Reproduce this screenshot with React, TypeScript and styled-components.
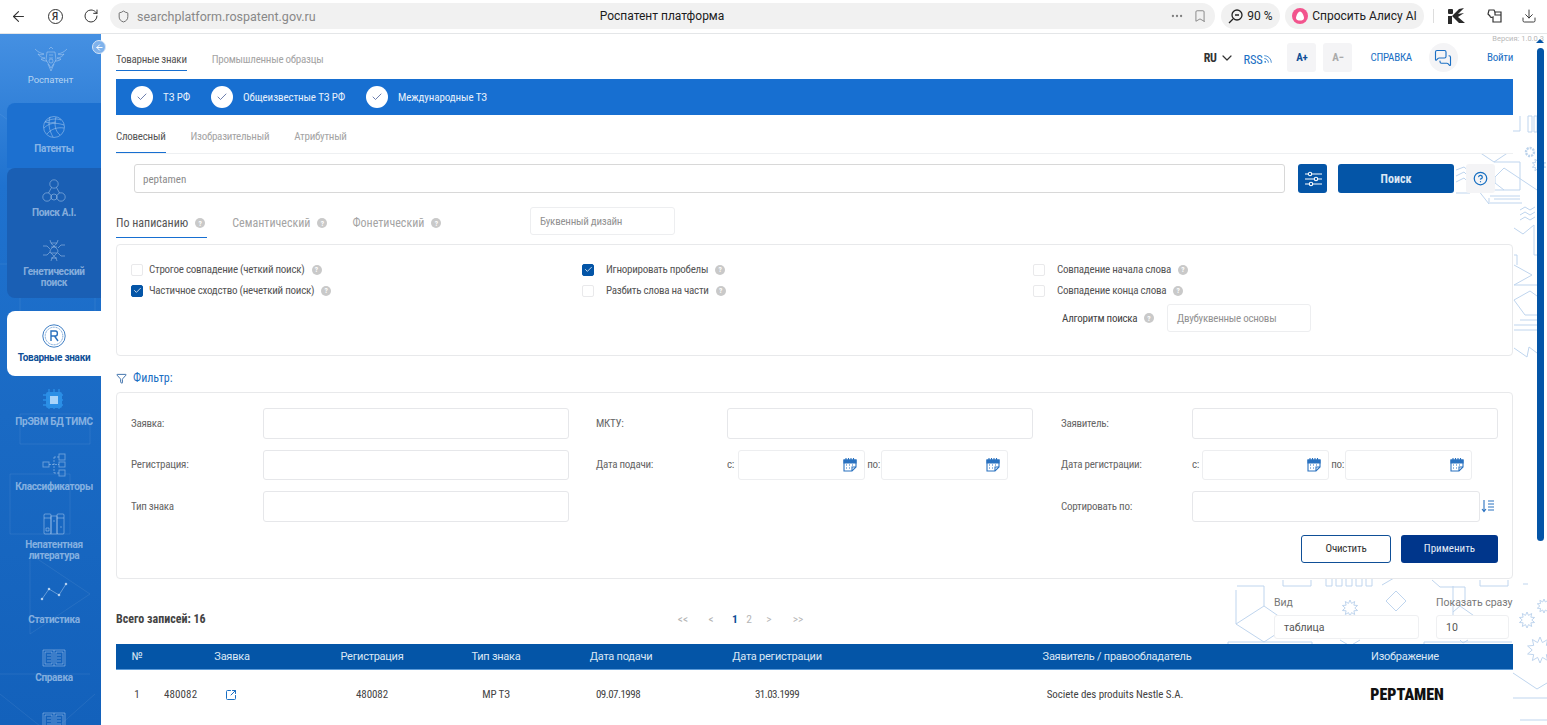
import React from "react";
import styled, { createGlobalStyle } from "styled-components";
import {
  ArrowLeft, RotateCw, Shield, Bookmark, Ellipsis, Download, Check,
  Rss, MessagesSquare, ChevronDown, Funnel, SquareArrowOutUpRight, CircleHelp,
} from "lucide-react";

const WIDE = `Roboto, "Liberation Sans", sans-serif`;

const Global = createGlobalStyle`
  html, body { margin: 0; padding: 0; height: 100%; overflow: hidden; background: #fff; }
  #root { height: 100%; }
  * { box-sizing: border-box; }
  body { font-family: ${WIDE}; font-size: 11px; font-stretch: 75%; letter-spacing: -0.26px; color: #444; }
`;

const Page = styled.div`display: flex; flex-direction: column; width: 1547px; height: 725px; overflow: hidden;`;

/* browser bar */
const BrowserBar = styled.header`
  height: 34px; flex: none; display: flex; align-items: center; padding: 0 0 1px 0; font-stretch: 100%;
  background: #fff; border-bottom: 1px solid #e4e6e8; color: #333; letter-spacing: 0;
`;
const NavSlot = styled.div<{ $w: number }>`
  width: ${p => p.$w}px; flex: none; display: flex; justify-content: center; align-items: center;
`;
const YaBadge = styled.span`
  width: 15px; height: 15px; border: 1.4px solid #333; border-radius: 50%; display: flex;
  align-items: center; justify-content: center; font-size: 10px; font-weight: 500; color: #333;
`;
const UrlPill = styled.div`
  width: 1105px; height: 26px; margin-left: 2px; flex: none; background: #f1f1f1; border-radius: 13px;
  display: grid; grid-template-columns: 1fr auto 1fr; align-items: center; padding: 0 8px 0 7px;
`;
const UrlLeft = styled.div`display: flex; align-items: center; gap: 7px; color: #888; font-size: 12.5px;`;
const Title = styled.div`font-size: 12px; color: #1c1c1c;`;
const UrlRight = styled.div`display: flex; align-items: center; justify-content: flex-end; gap: 9px; color: #7f7f7f;`;
const Pill = styled.div<{ $w: number; $ml: number }>`
  width: ${p => p.$w}px; margin-left: ${p => p.$ml}px; height: 26px; flex: none; border-radius: 13px;
  background: #f1f1f1; display: flex; align-items: center; justify-content: center; gap: 4px;
  font-size: 12px; color: #222;
`;
const BarSep = styled.div`width: 1px; height: 14px; background: #ddd; margin-left: 9px; flex: none;`;

const Body = styled.div`flex: 1; min-height: 0; display: flex;`;

/* sidebar */
const Sidebar = styled.aside`
  width: 101px; flex: none; position: relative; overflow: visible; display: flex; flex-direction: column;
  background: linear-gradient(180deg, #4590e2 0%, #1f72cf 22%, #1a6ac4 55%, #1361bb 100%);
  padding-left: 7px; z-index: 3; font-stretch: 100%;
`;
const SideLines = styled.svg`position: absolute; left: 0; top: 0; pointer-events: none;`;
const Collapse = styled.button`
  position: absolute; left: 92px; top: 6px; width: 14px; height: 14px; border-radius: 50%; padding: 0;
  border: 1.5px solid #d5e5f7; background: #7fb2ec; display: flex; align-items: center; justify-content: center; color: #fff;
`;
const Logo = styled.div`
  height: 69px; flex: none; margin-left: -7px; padding-top: 12px; display: flex; flex-direction: column; align-items: center;
  gap: 2px; color: rgba(215,230,248,.8); font-size: 9.5px; position: relative; letter-spacing: -0.1px;
`;
const SideBlock = styled.div<{ $tone: "light" | "dark" }>`
  position: relative; border-radius: 8px 0 0 ${p => (p.$tone === "dark" ? "8px" : "0")};
  background: ${p => (p.$tone === "dark" ? "#1a5fb4" : "#1c70d0")};
`;
const SideItem = styled.div<{ $active?: boolean; $shift?: number; $gap?: number }>`
  position: relative; height: 65px; flex: none; display: flex; flex-direction: column; align-items: center; justify-content: center;
  gap: ${p => p.$gap ?? 4}px; padding-bottom: ${p => p.$shift ?? 0}px;
  font-size: 10px; font-weight: 700; line-height: 11px; text-align: center; letter-spacing: -0.3px;
  color: ${p => (p.$active ? "#0f4f97" : "rgba(205,224,246,.62)")};
  background: ${p => (p.$active ? "#fff" : "transparent")};
  border-radius: ${p => (p.$active ? "8px 0 0 8px" : "0")};
  margin-top: ${p => (p.$active ? "13px" : "0")};
  svg { flex: none; }
`;

/* main */
const Main = styled.main`
  flex: 1; min-width: 0; position: relative; background: #fff; padding: 0 34px 0 15px; overflow: hidden;
`;
const Decor = styled.svg`position: absolute; right: 0; top: 76px;`;
const Content = styled.div`position: relative; z-index: 1; display: flex; flex-direction: column;`;
const Version = styled.div`position: absolute; right: 3px; top: 0; font-size: 7.5px; color: #b8b8b8; letter-spacing: 0; font-stretch: 100%;`;
const ScrollUp = styled.div`
  position: absolute; left: 1435px; top: 5px; width: 0; height: 0; z-index: 2;
  border-left: 4px solid transparent; border-right: 4px solid transparent; border-bottom: 4px solid #0455a7;
`;
const ScrollThumb = styled.div`position: absolute; left: 1436px; top: 14px; width: 7px; height: 493px; border-radius: 4px; background: #0455a7; z-index: 2;`;

const TopBar = styled.div`height: 45px; display: flex; align-items: flex-start; justify-content: space-between;`;
const Tabs = styled.div<{ $w?: number; $top?: number }>`
  display: flex; gap: 25px; flex: none; width: ${p => (p.$w ? `${p.$w}px` : "auto")}; margin-top: ${p => p.$top ?? 0}px;
`;
const Tab = styled.div<{ $active?: boolean; $h: number; $pt: number }>`
  height: ${p => p.$h}px; padding-top: ${p => p.$pt}px; display: flex; align-items: flex-start; gap: 6px; white-space: nowrap;
  color: ${p => (p.$active ? "#555" : "#a4a4a4")};
  border-bottom: 1px solid ${p => (p.$active ? "#176fd1" : "transparent")};
`;
const TopRight = styled.div`display: flex; align-items: center; height: 38px; padding-top: 9px; color: #1a6fc4;`;
const Lang = styled.div`display: flex; align-items: center; gap: 2px; color: #333; font-weight: 700; margin-right: 9px; font-size: 12px;`;
const RssLink = styled.div`display: flex; align-items: center; gap: 1px; font-size: 12.5px; margin-right: 14px; padding-top: 3px;`;
const SquareBtn = styled.div<{ $dim?: boolean; $ml?: number }>`
  width: 29px; height: 29px; border-radius: 3px; background: #f4f4f6; display: flex; align-items: center; justify-content: center;
  font-weight: 700; color: ${p => (p.$dim ? "#aaa" : "#0f4f97")}; margin-left: ${p => p.$ml ?? 0}px;
`;
const HelpLink = styled.div`margin-left: 18px;`;
const ChatBtn = styled.div`
  width: 29px; height: 29px; border-radius: 50%; background: #f4f4f6; margin-left: 17px; display: flex; align-items: center; justify-content: center;
`;
const Login = styled.div`margin-left: 29px;`;

const Band = styled.div`
  height: 36px; background: #176fd1; display: flex; align-items: center; padding-left: 15px; color: #e6f0fb; letter-spacing: -0.1px;
`;
const BandItem = styled.div<{ $w: number }>`display: flex; align-items: center; gap: 10px; width: ${p => p.$w}px;`;
const BandCheck = styled.span`
  width: 22px; height: 22px; border-radius: 50%; background: #fff; display: flex; align-items: center; justify-content: center; color: #4a5f9a;
`;
const SubTabsRow = styled.div`height: 39px; display: flex; align-items: flex-end; border-bottom: 1px solid #eef0f2; background: #fff;`;

const SearchRow = styled.div`display: flex; align-items: flex-start; margin-top: 10px; padding: 0 18px;`;
const SearchInput = styled.div`
  flex: 1; height: 29px; background: #fff; border: 1px solid #d8d8d8; border-radius: 3px; display: flex; align-items: center;
  padding: 1px 0 0 8px; color: #8b8b8b; letter-spacing: 0;
`;
const FilterBtn = styled.button`
  width: 29px; height: 29px; margin-left: 13px; border: 0; border-radius: 3px; background: #0455a7; color: #fff; padding: 0;
  display: flex; align-items: center; justify-content: center;
`;
const SearchBtn = styled.button`
  width: 116px; height: 29px; margin-left: 11px; border: 0; border-radius: 3px; background: #0455a7; color: #dbe7f4;
  font-family: ${WIDE}; font-size: 12px; font-weight: 700; font-stretch: 75%;
`;
const HelpBtn = styled.div`
  width: 29px; height: 29px; margin-left: 12px; border-radius: 3px; background: #f4f4f6; color: #176fc1;
  display: flex; align-items: center; justify-content: center;
`;
const ModeRow = styled.div`display: flex; align-items: flex-start; margin-top: 14px; height: 31px;`;
const ModeTab = styled.div<{ $active?: boolean }>`
  height: 31px; display: flex; align-items: flex-start; padding-top: 9px; padding-right: ${p => (p.$active ? "2px" : "0")};
  gap: 7px; white-space: nowrap; font-size: 12px; letter-spacing: 0;
  color: ${p => (p.$active ? "#555" : "#a4a4a4")};
  border-bottom: 1px solid ${p => (p.$active ? "#176fd1" : "transparent")};
`;
const Dot = styled.span`
  width: 10px; height: 10px; border-radius: 50%; background: #c9c9c9; color: #fff; flex: none; display: inline-flex;
  align-items: center; justify-content: center; font-size: 7.5px; font-weight: 700; letter-spacing: 0;
`;
const ModeDot = styled(Dot)`margin-top: 2px;`;
const Box = styled.div<{ $w: number; $ml?: number }>`
  width: ${p => p.$w}px; height: 28px; margin-left: ${p => p.$ml ?? 0}px; flex: none; background: #fff;
  border: 1px solid #edeef0; border-radius: 3px; display: flex; align-items: center; padding-left: 9px; color: #929292;
`;
const Card = styled.section`
  background: #fff; border: 1px solid #e8e9eb; border-radius: 4px;
`;
const OptionsCard = styled(Card)`
  height: 112px; margin-top: 6px; padding: 14px 14px 0; display: grid; grid-template-columns: 451px 451px 1fr; align-content: start;
`;
const OptionsCol = styled.div`display: flex; flex-direction: column;`;
const Option = styled.div<{ $gap: number }>`
  height: 21px; display: flex; align-items: center; gap: ${p => p.$gap}px; color: #555; white-space: nowrap;
`;
const OptionLabel = styled.span`display: flex; align-items: center; gap: 7px;`;
const CheckBox = styled.span<{ $on?: boolean }>`
  width: 12px; height: 12px; border-radius: 2px; flex: none; display: flex; align-items: center; justify-content: center; color: #fff;
  border: 1px solid ${p => (p.$on ? "#0455a7" : "#e9e9eb")}; background: ${p => (p.$on ? "#0455a7" : "#fff")};
`;
const AlgoRow = styled.div`display: flex; align-items: center; margin-left: 29px; margin-top: 3px; gap: 6px; color: #444; white-space: nowrap;`;
const AlgoLabel = styled.span`width: 76px;`;
const FilterHead = styled.div`height: 36px; display: flex; align-items: center; gap: 6px; color: #1a6fc4; font-size: 12px; letter-spacing: 0; padding-top: 8px;`;
const FilterCard = styled(Card)`
  height: 187px; padding: 15px 14px 0; display: flex; flex-direction: column;
`;
const FilterGrid = styled.div`display: grid; grid-template-columns: repeat(3, 437px); column-gap: 28px; row-gap: 11px;`;
const Field = styled.div<{ $lead?: number }>`
  display: grid; grid-template-columns: ${p => p.$lead ?? 131}px 306px; align-items: center; height: 30.5px; color: #666; white-space: nowrap;
`;
const FieldInput = styled.div`
  height: 30.5px; border: 1px solid #e6e7ea; border-radius: 3px; background: #fff; position: relative;
`;
const DateRow = styled.div`display: flex; align-items: center;`;
const DateLabel = styled.span<{ $w: number }>`width: ${p => p.$w}px; flex: none; color: #666;`;
const DateInput = styled.div`
  width: 127px; height: 30px; flex: none; border: 1px solid #edeef0; border-radius: 3px; background: #fff;
  display: flex; align-items: center; justify-content: flex-end; padding-right: 7px; color: #2a72c0;
`;
const SortRow = styled.div`display: flex; align-items: center; gap: 1px; color: #2a72c0;`;
const SortInput = styled(FieldInput)`width: 288px; flex: none;`;
const Actions = styled.div`display: flex; justify-content: flex-end; gap: 10px; margin-top: 13px;`;
const ClearBtn = styled.button`
  width: 90px; height: 28px; border: 1px solid #0f4f97; background: #fff; border-radius: 3px; color: #333;
  font-family: ${WIDE}; font-size: 11px; font-stretch: 75%; letter-spacing: -0.25px;
`;
const ApplyBtn = styled.button`
  width: 97px; height: 28px; border: 0; background: #00368b; border-radius: 3px; color: #e3ebf6;
  font-family: ${WIDE}; font-size: 11px; font-stretch: 75%;
`;

const TotalsRow = styled.div`height: 65px; display: flex; position: relative;`;
const Total = styled.div`font-weight: 700; color: #444; margin-top: 33px; width: 560px; font-size: 12px; letter-spacing: 0;`;
const Pager = styled.div`display: flex; margin-top: 33px; color: #b5b5b5; height: 14px; width: 132px; letter-spacing: 0;`;
const PageCell = styled.span<{ $w: number; $on?: boolean }>`
  width: ${p => p.$w}px; flex: none; text-align: center; font-size: 11.5px;
  font-weight: ${p => (p.$on ? 700 : 400)}; color: ${p => (p.$on ? "#0f4f97" : "#b5b5b5")};
`;
const RightGroup = styled.div`margin-left: auto; display: flex; gap: 17px; padding-right: 4px; padding-top: 17px; font-stretch: 100%; letter-spacing: 0;`;
const Labeled = styled.div<{ $w: number }>`
  width: ${p => p.$w}px; display: flex; flex-direction: column; gap: 5px; color: #777; white-space: nowrap; font-size: 10.5px;
`;
const LabeledText = styled.span`height: 14px; line-height: 14px;`;
const MiniSelect = styled.div`
  height: 24px; border: 1px solid #eff0f2; border-radius: 3px; background: #fff; color: #555;
  display: flex; align-items: center; padding-left: 9px; font-size: 10.5px;
`;

const HeadRow = styled.div`
  display: grid; grid-template-columns: 42px 148px 132px 116px 134px 178px 502px 74px 71px; align-items: center;
  height: 26px; background: #0455a7; border-bottom: 1px solid #5d9bd8; color: #dce8f5; text-align: center; white-space: nowrap;
  font-size: 11px; font-stretch: 100%; letter-spacing: -0.25px;
`;
const BodyRow = styled.div`
  display: grid; grid-template-columns: 42px 148px 132px 116px 128px 190px 486px 98px 57px; align-items: center;
  height: 56px; background: #fff; text-align: center; color: #444; padding-bottom: 7px; white-space: nowrap; letter-spacing: -0.1px;
`;
const DateCell = styled.span`letter-spacing: -0.5px;`;
const AppCell = styled.div`display: flex; align-items: center; gap: 27px; padding-left: 6px; color: #1a6fc4;`;
const AppNum = styled.span`color: #444; width: 34px; text-align: left; letter-spacing: 0.1px;`;
const Mark = styled.div`font-weight: 900; font-size: 16px; letter-spacing: 0; color: #111; white-space: nowrap;`;

const star = (cx: number, cy: number, r: number) => {
  const pts: string[] = [];
  for (let i = 0; i < 20; i++) {
    const a = (i * Math.PI) / 10;
    const q = i % 2 ? r * 0.6 : r;
    pts.push(`${(cx + q * Math.sin(a)).toFixed(1)},${(cy - q * Math.cos(a)).toFixed(1)}`);
  }
  return pts.join(" ");
};

const DECOR_PATHS = [
  "M1504 122V131H1520V116", "M1528 116h4v16h-4z", "M1534 116h3v16h-3z",
  "M1479 152L1494 142L1509 152L1494 162Z", "M1494 142V132H1490",
  "M1494 162H1520V190H1478", "M1495 177L1504 168L1537 190", "M1495 177V183L1504 190",
  "M1478 190L1489 204V198", "M1490 196H1520M1494 199H1520M1490 203H1522",
  "M1456 170L1464 167L1470 172M1456 176L1464 172L1470 178M1456 182L1464 178L1470 184M1456 193H1470",
  "M1520 210L1525 207L1530 210L1535 207M1520 215L1525 212L1530 215L1535 212M1520 220L1525 217L1530 220L1535 217",
  "M1514 228L1523 234L1534 225V255H1537",
  "M1514 255H1517V265M1514 285L1532 275L1514 265M1514 285H1537",
  "M1514 300L1530 291L1537 296M1514 300L1525 315H1537",
  "M1520 320H1537M1514 325H1537M1514 330H1537",
  "M1514 348L1527 357L1529 347L1537 353",
  "M1283 580V586H1311V580", "M1326 579V586H1332V579M1336 579V586H1342V579M1346 579V586H1352V579M1356 579V586H1362V579M1366 579V586H1372V579",
  "M1382 585L1394 578", "M1432 580L1440 587H1465V600", "M1480 580V586H1508V580", "M1523 584H1528",
  "M1237 586H1264V606", "M1236 590V624L1264 642L1290 625", "M1236 624L1264 606L1290 624",
  "M1228 645V642H1312V645", "M1424 645V642H1512",
  "M1396 591L1406 601L1396 611L1386 601Z", "M1453 612L1460 606L1480 620", "M1453 586V615",
  "M1460 640L1463 643L1468 640", "M1340 640L1350 646L1360 640",
  "M1513 673L1537 689L1547 683", "M1513 698H1547", "M1520 720H1547",
];

const DecorArt = () => (
  <Decor width={347} height={615} viewBox="1200 110 347 615" fill="none" stroke="#bfd5ee" strokeWidth="1">
    {DECOR_PATHS.map(d => <path key={d} d={d} />)}
    <circle cx="1530" cy="152" r="4" stroke="#bcd3ec" strokeWidth="2.4" strokeDasharray="2 1" />
    <polygon points={star(1350, 608, 8)} />
    <polygon points={star(1527, 620, 8)} />
    <polygon points={star(1540, 650, 13)} />
    <polygon points={star(1544, 606, 7)} />
    <polygon points={star(1539, 165, 7)} />
  </Decor>
);

const Emblem = () => (
  <svg width="38" height="26" viewBox="0 0 34 26" fill="none" stroke="rgba(205,224,246,.7)" strokeWidth=".6">
    <path d="M1 3C4 6 6 7 10 8C8 9 6 9 4 8C5 10 8 12 11 12C10 13 8 13 7 13C9 15 11 15 13 15" />
    <path d="M33 3C30 6 28 7 24 8C26 9 28 9 30 8C29 10 26 12 23 12C24 13 26 13 27 13C25 15 23 15 21 15" />
    <path d="M13 6H21L22 14L17 22L12 14Z" />
    <path d="M15 3L17 1L19 3M14 18L17 25L20 18M15 9H19M15 12H19" />
    <circle cx="17" cy="15" r="2" />
  </svg>
);

const ic = { fill: "none", stroke: "rgba(196,219,245,.5)", strokeWidth: 0.9 };

const IconGlobe = () => (
  <svg width="24" height="24" viewBox="0 0 24 24" {...ic}>
    <circle cx="12" cy="12" r="10.5" />
    <path d="M3 7C8 4 14 3 19 5M2 13C7 8 13 7 22 10M5 19C9 14 15 12 22 13M8 2C6 9 7 15 11 22M14 2C12 9 13 16 18 20M3 7L8 8L14 7" />
  </svg>
);
const IconAI = () => (
  <svg width="24" height="24" viewBox="0 0 24 24" {...ic}>
    <circle cx="12" cy="5" r="4.2" /><circle cx="5" cy="18" r="4.2" /><circle cx="12" cy="18" r="3" /><circle cx="19" cy="18" r="4.2" />
    <path d="M9.5 8.5L6.5 14M14.5 8.5L17.5 14" />
  </svg>
);
const IconDna = () => (
  <svg width="24" height="24" viewBox="0 0 24 24" {...ic}>
    <path d="M8 2C9 8 15 9 16 13C16 16 10 18 9 23M16 2C15 8 9 9 8 13C8 16 14 18 15 23M9 5H15M9 9H15M9 15H15M9 20H15" />
    <path d="M1 8H5L8 11M23 7H19L16 10M1 17H5L8 14M23 18H19L16 15" />
  </svg>
);
const IconTm = () => (
  <svg width="24" height="24" viewBox="0 0 24 24" fill="none" stroke="#2a70bd" strokeWidth=".9">
    <circle cx="12" cy="12" r="11.2" /><circle cx="12" cy="12" r="8.8" strokeWidth=".7" strokeDasharray="1 .6" />
    <path d="M9 17V7H13.5C16 7 16 12 13.5 12H9M12.5 12L16 17" strokeWidth="1.4" />
  </svg>
);
const IconChip = () => (
  <svg width="24" height="24" viewBox="0 0 24 24">
    <rect x="4" y="4" width="16" height="16" rx="2" fill="#2b8fe6" />
    <rect x="8" y="8" width="8" height="8" fill="#a8d4fa" />
    <path d="M7 1V23M12 1V23M17 1V23M1 7H23M1 12H23M1 17H23" stroke="#2b8fe6" strokeWidth="1.3" strokeDasharray="3 14" />
  </svg>
);
const IconTree = () => (
  <svg width="24" height="24" viewBox="0 0 24 24" {...ic}>
    <rect x="1" y="9" width="6" height="5" /><rect x="17" y="1" width="6" height="6" /><rect x="17" y="9" width="6" height="5" /><rect x="17" y="17" width="6" height="6" />
    <path d="M7 11.5H17M12 4V20M12 4H17M12 20H17" strokeDasharray="2 1" />
  </svg>
);
const IconBooks = () => (
  <svg width="22" height="22" viewBox="0 0 22 22" {...ic}>
    <rect x="1" y="1" width="7" height="20" rx="1" /><rect x="8" y="3" width="6" height="18" /><rect x="14" y="1" width="7" height="20" rx="1" />
    <path d="M1 5H8M14 5H21M3 15H6V18H3ZM10 8H12M17 14H19" />
  </svg>
);
const IconStat = () => (
  <svg width="28" height="20" viewBox="0 0 28 20" {...ic}>
    <path d="M2 17L9 7L19 13L26 2" />
    <circle cx="2" cy="17" r="1" fill="#d5e5f7" /><circle cx="9" cy="7" r="1" fill="#d5e5f7" /><circle cx="19" cy="13" r="1" fill="#d5e5f7" /><circle cx="26" cy="2" r="1" fill="#d5e5f7" />
  </svg>
);
const IconBook = () => (
  <svg width="24" height="20" viewBox="0 0 24 20" {...ic}>
    <path d="M1 2H23V18H1ZM12 2V18M3 4H10V16H3ZM14 4H21V16H14ZM5 7H9M5 10H9M5 13H9M15 7H19M15 10H19M15 13H19" />
  </svg>
);
const Calendar = () => (
  <svg width="14" height="15" viewBox="0 0 14 15" fill="none" stroke="currentColor" strokeWidth="1.1">
    <path d="M1 3H13V10L9 14H1Z" fill="#fff" />
    <path d="M1 3H13V6H1Z" fill="currentColor" />
    <path d="M3 1V4M5.500 1V4M8 1V4M10.500 1V4M3 8H4M6 8H7M9 8H10M3 11H4M6 11H7M13 10H9V14" />
  </svg>
);
const SortIcon = () => (
  <svg width="14" height="14" viewBox="0 0 14 14" fill="none" stroke="currentColor" strokeWidth="1.1">
    <path d="M3 1V12M1 10L3 12.500L5 10M7 2H13M7 5H13M7 8H13M7 11H13" />
  </svg>
);
const SlidersIcon = () => (
  <svg width="18" height="16" viewBox="0 0 18 16" fill="none" stroke="#fff" strokeWidth="1.1">
    <path d="M1 3H18M1 8H18M1 13H18" />
    <circle cx="6" cy="3" r="1.700" fill="#0455a7" /><circle cx="12" cy="8" r="1.700" fill="#0455a7" /><circle cx="7" cy="13" r="1.700" fill="#0455a7" />
  </svg>
);
const AliceMark = () => (
  <svg width="16" height="16" viewBox="0 0 16 16">
    <circle cx="8" cy="8" r="8" fill="#f2548d" />
    <path d="M8 3.500C10 3.500 12 8 12 10C12 12 10 12.500 8 12.500C6 12.500 4 12 4 10C4 8 6 3.500 8 3.500Z" fill="#fff" />
  </svg>
);
const SpeechSearch = () => (
  <svg width="15" height="15" viewBox="0 0 15 15" fill="none" stroke="#222" strokeWidth="1.3">
    <circle cx="9" cy="6" r="5" /><path d="M5 10L1 14M7 6H11" />
  </svg>
);
const BrandK = () => (
  <svg width="18" height="16" viewBox="0 0 18 16" fill="#2a2a2a">
    <rect x="0" y="1" width="5" height="5" rx="1" /><rect x="0" y="8" width="4" height="8" />
    <path d="M4 8L11 1L16 0L10 6L16 5L10 9L17 15H11L6 10Z" />
  </svg>
);
const ExtIcon = () => (
  <svg width="16" height="15" viewBox="0 0 16 15" fill="none" stroke="#333" strokeWidth="1.2">
    <path d="M2 1H7L8 3H14V13H6V8C4 9 3 8 3 7L1 5Z" /><path d="M8 3V6H14" />
  </svg>
);

const SIDE_BACK = "M0 80L40 110L80 80M10 440H70V500H10ZM30 520L90 560L30 600ZM0 640H90M0 660L50 700L95 660M20 380H90V410H20ZM60 240L95 260V300M0 230H20V290";

const Hint = () => <Dot>?</Dot>;

export default function App() {
  return (
    <Page>
      <Global />
      <BrowserBar>
        <NavSlot $w={37}><ArrowLeft size={17} strokeWidth={1.5} /></NavSlot>
        <NavSlot $w={36}><YaBadge>Я</YaBadge></NavSlot>
        <NavSlot $w={35}><RotateCw size={16} strokeWidth={1.5} /></NavSlot>
        <UrlPill>
          <UrlLeft><Shield size={13} strokeWidth={1.5} color="#555" />searchplatform.rospatent.gov.ru</UrlLeft>
          <Title>Роспатент платформа</Title>
          <UrlRight><Ellipsis size={14} /><Bookmark size={14} strokeWidth={1.5} /></UrlRight>
        </UrlPill>
        <Pill $w={59} $ml={6}><SpeechSearch />90 %</Pill>
        <Pill $w={139} $ml={5}><AliceMark />Спросить Алису AI</Pill>
        <BarSep />
        <NavSlot $w={46}><BrandK /></NavSlot>
        <NavSlot $w={30}><ExtIcon /></NavSlot>
        <NavSlot $w={38}><Download size={16} strokeWidth={1.4} /></NavSlot>
      </BrowserBar>
      <Body>
        <Sidebar>
          <SideLines width={101} height={691} viewBox="0 0 101 691" fill="none" stroke="rgba(255,255,255,.07)">
            <path d={SIDE_BACK} />
          </SideLines>
          <Collapse><ArrowLeft size={9} strokeWidth={2.5} /></Collapse>
          <Logo><Emblem />Роспатент</Logo>
          <SideBlock $tone="light"><SideItem $shift={2}><IconGlobe />Патенты</SideItem></SideBlock>
          <SideBlock $tone="dark">
            <SideItem $shift={4}><IconAI />Поиск A.I.</SideItem>
            <SideItem $shift={6}><IconDna />Генетический<br />поиск</SideItem>
          </SideBlock>
          <SideItem $active><IconTm />Товарные знаки</SideItem>
          <SideItem $shift={2}><IconChip />ПрЭВМ БД ТИМС</SideItem>
          <SideItem $shift={2}><IconTree />Классификаторы</SideItem>
          <SideItem $shift={4}><IconBooks />Непатентная<br />литература</SideItem>
          <SideItem $gap={12}><IconStat />Статистика</SideItem>
          <SideItem $shift={6}><IconBook />Справка</SideItem>
          <SideItem $shift={25}><IconBook /></SideItem>
        </Sidebar>
        <Main>
          <DecorArt />
          <Version>Версия: 1.0.0.3</Version>
          <ScrollUp />
          <ScrollThumb />
          <Content>
            <TopBar>
              <Tabs $top={16}>
                <Tab $active $h={21} $pt={3}>Товарные знаки</Tab>
                <Tab $h={21} $pt={3}>Промышленные образцы</Tab>
              </Tabs>
              <TopRight>
                <Lang>RU <ChevronDown size={16} strokeWidth={1.8} /></Lang>
                <RssLink>RSS<Rss size={10} strokeWidth={1.8} /></RssLink>
                <SquareBtn>A+</SquareBtn>
                <SquareBtn $dim $ml={7}>A−</SquareBtn>
                <HelpLink>СПРАВКА</HelpLink>
                <ChatBtn><MessagesSquare size={18} strokeWidth={1.5} /></ChatBtn>
                <Login>Войти</Login>
              </TopRight>
            </TopBar>
            <Band>
              <BandItem $w={80}><BandCheck><Check size={12} strokeWidth={1.6} /></BandCheck>ТЗ РФ</BandItem>
              <BandItem $w={155}><BandCheck><Check size={12} strokeWidth={1.6} /></BandCheck>Общеизвестные ТЗ РФ</BandItem>
              <BandItem $w={150}><BandCheck><Check size={12} strokeWidth={1.6} /></BandCheck>Международные ТЗ</BandItem>
            </Band>
            <SubTabsRow>
              <Tabs>
                <Tab $active $h={24} $pt={1}>Словесный</Tab>
                <Tab $h={24} $pt={1}>Изобразительный</Tab>
                <Tab $h={24} $pt={1}>Атрибутный</Tab>
              </Tabs>
            </SubTabsRow>
            <SearchRow>
              <SearchInput>peptamen</SearchInput>
              <FilterBtn><SlidersIcon /></FilterBtn>
              <SearchBtn>Поиск</SearchBtn>
              <HelpBtn><CircleHelp size={15} strokeWidth={2} /></HelpBtn>
            </SearchRow>
            <ModeRow>
              <Tabs $w={414}>
                <ModeTab $active>По написанию <ModeDot>?</ModeDot></ModeTab>
                <ModeTab>Семантический <ModeDot>?</ModeDot></ModeTab>
                <ModeTab>Фонетический <ModeDot>?</ModeDot></ModeTab>
              </Tabs>
              <Box $w={145}>Буквенный дизайн</Box>
            </ModeRow>
            <OptionsCard>
              <OptionsCol>
                <Option $gap={6}><CheckBox /><OptionLabel>Строгое совпадение (четкий поиск) <Hint /></OptionLabel></Option>
                <Option $gap={6}><CheckBox $on><Check size={9} strokeWidth={2} /></CheckBox><OptionLabel>Частичное сходство (нечеткий поиск) <Hint /></OptionLabel></Option>
              </OptionsCol>
              <OptionsCol>
                <Option $gap={12}><CheckBox $on><Check size={9} strokeWidth={2} /></CheckBox><OptionLabel>Игнорировать пробелы <Hint /></OptionLabel></Option>
                <Option $gap={12}><CheckBox /><OptionLabel>Разбить слова на части <Hint /></OptionLabel></Option>
              </OptionsCol>
              <OptionsCol>
                <Option $gap={12}><CheckBox /><OptionLabel>Совпадение начала слова <Hint /></OptionLabel></Option>
                <Option $gap={12}><CheckBox /><OptionLabel>Совпадение конца слова <Hint /></OptionLabel></Option>
                <AlgoRow><AlgoLabel>Алгоритм поиска</AlgoLabel><Hint /><Box $w={144} $ml={7}>Двубуквенные основы</Box></AlgoRow>
              </OptionsCol>
            </OptionsCard>
            <FilterHead><Funnel size={11} strokeWidth={1.7} color="#0f4f97" />Фильтр:</FilterHead>
            <FilterCard>
              <FilterGrid>
                <Field $lead={132}>Заявка:<FieldInput /></Field>
                <Field>МКТУ:<FieldInput /></Field>
                <Field>Заявитель:<FieldInput /></Field>
                <Field $lead={132}>Регистрация:<FieldInput /></Field>
                <Field>Дата подачи:
                  <DateRow>
                    <DateLabel $w={11}>с:</DateLabel><DateInput><Calendar /></DateInput>
                    <DateLabel $w={16}>&nbsp;по:</DateLabel><DateInput><Calendar /></DateInput>
                  </DateRow>
                </Field>
                <Field>Дата регистрации:
                  <DateRow>
                    <DateLabel $w={10}>с:</DateLabel><DateInput><Calendar /></DateInput>
                    <DateLabel $w={16}>&nbsp;по:</DateLabel><DateInput><Calendar /></DateInput>
                  </DateRow>
                </Field>
                <Field $lead={132}>Тип знака<FieldInput /></Field>
                <div />
                <Field>Сортировать по:<SortRow><SortInput /><SortIcon /></SortRow></Field>
              </FilterGrid>
              <Actions>
                <ClearBtn>Очистить</ClearBtn>
                <ApplyBtn>Применить</ApplyBtn>
              </Actions>
            </FilterCard>
            <TotalsRow>
              <Total>Всего записей: 16</Total>
              <Pager>
                <PageCell $w={14}>&lt;&lt;</PageCell>
                <PageCell $w={14} />
                <PageCell $w={14}>&lt;</PageCell>
                <PageCell $w={13} />
                <PageCell $w={8} $on>1</PageCell>
                <PageCell $w={6} />
                <PageCell $w={8}>2</PageCell>
                <PageCell $w={10} />
                <PageCell $w={12}>&gt;</PageCell>
                <PageCell $w={15} />
                <PageCell $w={16}>&gt;&gt;</PageCell>
              </Pager>
              <RightGroup>
                <Labeled $w={145}><LabeledText>Вид</LabeledText><MiniSelect>таблица</MiniSelect></Labeled>
                <Labeled $w={73}><LabeledText>Показать сразу</LabeledText><MiniSelect>10</MiniSelect></Labeled>
              </RightGroup>
            </TotalsRow>
            <HeadRow>
              <span>№</span><span>Заявка</span><span>Регистрация</span><span>Тип знака</span><span>Дата подачи</span>
              <span>Дата регистрации</span><span>Заявитель / правообладатель</span><span>Изображение</span><span />
            </HeadRow>
            <BodyRow>
              <span>1</span>
              <AppCell><AppNum>480082</AppNum><SquareArrowOutUpRight size={12} strokeWidth={2} /></AppCell>
              <span>480082</span><span>МР ТЗ</span><DateCell>09.07.1998</DateCell><DateCell>31.03.1999</DateCell>
              <span>Societe des produits Nestle S.A.</span><Mark>PEPTAMEN</Mark><span />
            </BodyRow>
          </Content>
        </Main>
      </Body>
    </Page>
  );
}
